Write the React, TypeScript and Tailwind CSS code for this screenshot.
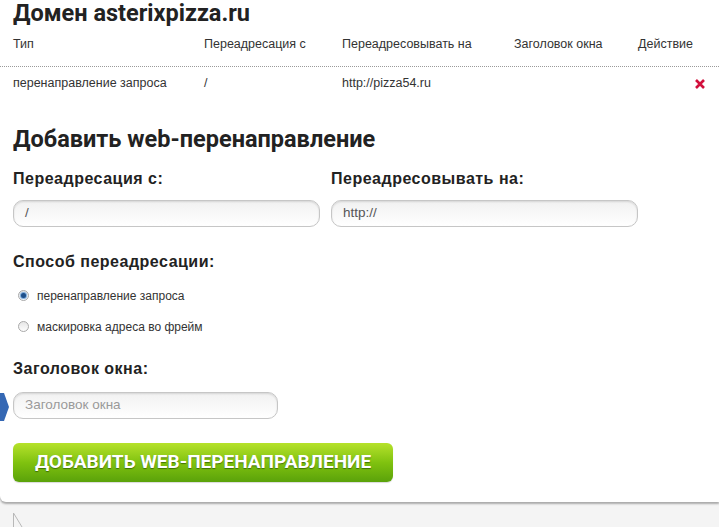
const rows = [
  { type: "перенаправление запроса", from: "/", to: "http://pizza54.ru", title: "" },
];

const cols = "grid grid-cols-[191px_138px_172px_124px_1fr]";

const Radio = ({ checked, label }: { checked?: boolean; label: string }) => (
  <label className="flex h-[31px] items-center pl-[5px]">
    <span className="flex h-[11px] w-[11px] items-center justify-center rounded-full border border-[#a9a9a9] bg-gradient-to-b from-[#e6e6e6] to-[#fdfdfd]">
      {checked && <span className="h-[5px] w-[5px] rounded-full bg-[#1e4f8a] shadow-[0_0_1px_1px_#6fa3d9]" />}
    </span>
    <span className="ml-[8px] text-[12px] text-[#333]">{label}</span>
  </label>
);

const Field = ({ value, placeholder, w }: { value?: string; placeholder?: string; w: string }) => (
  <div
    className={`${w} flex h-[27px] items-center rounded-[10px] border border-[#c6c6c6] bg-gradient-to-b from-[#f1f1f1] to-white px-[11px] text-[13.5px] shadow-[inset_0_1px_2px_rgba(0,0,0,0.12)]`}
  >
    {value ? <span className="text-[#555]">{value}</span> : <span className="text-[#9a9a9a]">{placeholder}</span>}
  </div>
);

const Label = ({ children, className = "" }: { children: React.ReactNode; className?: string }) => (
  <div className={`text-[16px] leading-[20px] font-bold tracking-[0.5px] text-[#222] ${className}`}>{children}</div>
);

export default function App() {
  return (
    <div className="relative min-h-[527px] bg-[#f4f4f4] font-['Liberation_Sans',Arial,sans-serif] text-[#222]">
      <div className="relative rounded-bl-[6px] bg-white pb-[20px] shadow-[0_2px_2px_rgba(0,0,0,0.3)]">
        <h1 className="px-[13px] font-['Roboto',sans-serif] text-[23.5px] leading-[27px] font-bold text-[#222]">
          Домен asterixpizza.ru
        </h1>

        <div className={`${cols} h-[39px] px-[13px] pt-[10px] text-[12.5px] leading-[14px] text-[#333]`}>
          <span>Тип</span>
          <span>Переадресация с</span>
          <span>Переадресовывать на</span>
          <span>Заголовок окна</span>
          <span>Действие</span>
        </div>
        <div className="border-t border-dotted border-[#9a9a9a]" />
        {rows.map((r) => (
          <div key={r.to} className={`${cols} h-[33px] items-center px-[13px] text-[12.5px] text-[#333]`}>
            <span>{r.type}</span>
            <span>{r.from}</span>
            <span>{r.to}</span>
            <span>{r.title}</span>
            <span className="flex justify-end pr-[1px]">
              <svg width="10" height="10" viewBox="0 0 10 10">
                <path d="M1 1L9 9M9 1L1 9" stroke="#d2103c" strokeWidth="2.6" />
              </svg>
            </span>
          </div>
        ))}

        <h2 className="mt-[25px] px-[13px] font-['Roboto',sans-serif] text-[23.5px] leading-[28px] font-bold text-[#222]">
          Добавить web-перенаправление
        </h2>

        <div className="mt-[16px] flex gap-[11px] px-[13px]">
          <div>
            <Label>Переадресация с:</Label>
            <div className="mt-[11px]">
              <Field w="w-[307px]" value="/" />
            </div>
          </div>
          <div>
            <Label>Переадресовывать на:</Label>
            <div className="mt-[11px]">
              <Field w="w-[307px]" value="http://" />
            </div>
          </div>
        </div>

        <Label className="mt-[25px] px-[13px]">Способ переадресации:</Label>
        <div className="mt-[8px] px-[13px]">
          <Radio checked label="перенаправление запроса" />
          <Radio label="маскировка адреса во фрейм" />
        </div>

        <Label className="mt-[17px] px-[13px]">Заголовок окна:</Label>
        <div className="relative mt-[13px] px-[13px]">
          <svg className="absolute top-[1px] left-0" width="9" height="28" viewBox="0 0 9 28">
            <path d="M0 0H4L9 14L4 28H0Z" fill="#3568b4" />
          </svg>
          <Field w="w-[265px]" placeholder="Заголовок окна" />
        </div>

        <div className="mt-[24px] px-[13px]">
          <button className="flex h-[39px] w-[380px] items-center justify-center rounded-[6px] bg-gradient-to-b from-[#b6e22a] via-[#80c20f] to-[#5aa20a] font-['Roboto',sans-serif] text-[19px] font-bold text-white uppercase shadow-[0_1px_1px_rgba(0,0,0,0.15)] [text-shadow:0_1px_1px_rgba(40,80,0,0.7)]">
            Добавить web-перенаправление
          </button>
        </div>
      </div>

      <svg className="absolute top-[513px] left-[13px]" width="10" height="14" viewBox="0 0 10 14">
        <path d="M0.5 0V14M0.5 0L9 14" stroke="#b8b8b8" strokeWidth="1" fill="none" />
      </svg>
    </div>
  );
}
